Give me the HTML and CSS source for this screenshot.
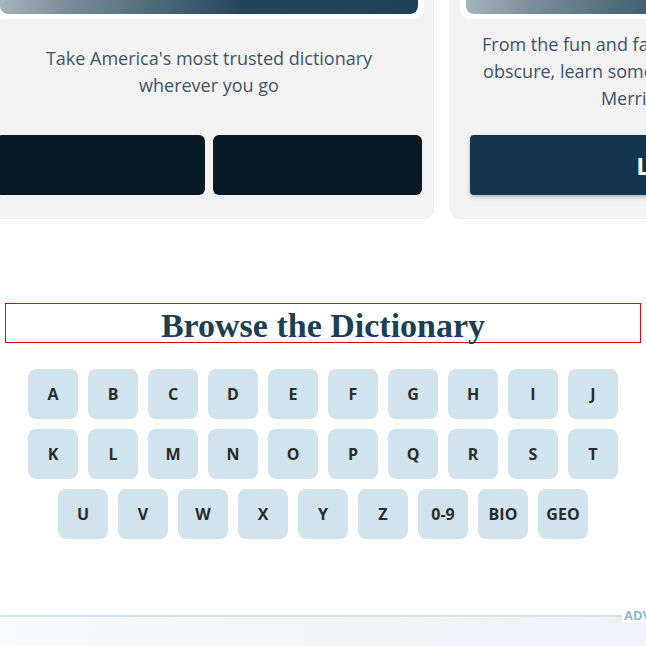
FILE: index.html
```html
<!DOCTYPE html>
<html lang="en">
<head>
<meta charset="utf-8">
<title>Browse the Dictionary</title>
<link rel="stylesheet" href="styles.css">
</head>
<body>
<div class="cards">
  <div class="card">
    <div class="frame"><div class="art"></div></div>
    <p class="blurb">Take America's most trusted dictionary wherever you go</p>
    <div class="stores">
      <a class="store" href="#"></a>
      <a class="store" href="#"></a>
    </div>
  </div>
  <div class="card">
    <div class="frame"><div class="art"></div></div>
    <p class="blurb"><span class="line">From the fun and fascinating to the downright</span><span class="line">obscure, learn something new every day from</span><span class="line">Merriam-Webster</span></p>
    <a class="cta" href="#">Learn More</a>
  </div>
</div>

<h2 class="browse-title">Browse the Dictionary</h2>

<nav class="alpha">
  <a class="key" href="#">A</a><a class="key" href="#">B</a><a class="key" href="#">C</a><a class="key" href="#">D</a><a class="key" href="#">E</a><a class="key" href="#">F</a><a class="key" href="#">G</a><a class="key" href="#">H</a><a class="key" href="#">I</a><a class="key" href="#">J</a>
  <a class="key" href="#">K</a><a class="key" href="#">L</a><a class="key" href="#">M</a><a class="key" href="#">N</a><a class="key" href="#">O</a><a class="key" href="#">P</a><a class="key" href="#">Q</a><a class="key" href="#">R</a><a class="key" href="#">S</a><a class="key" href="#">T</a>
  <a class="key" href="#">U</a><a class="key" href="#">V</a><a class="key" href="#">W</a><a class="key" href="#">X</a><a class="key" href="#">Y</a><a class="key" href="#">Z</a><a class="key" href="#">0-9</a><a class="key" href="#">BIO</a><a class="key" href="#">GEO</a>
</nav>

<div class="ad">
  <span class="ad-label">ADVERTISEMENT</span>
</div>
</body>
</html>
```

FILE: styles.css
```css
html, body {
  margin: 0;
  padding: 0;
  overflow: hidden;
  background: #fff;
  font-family: "Open Sans", "Noto Sans", sans-serif;
}

.cards {
  display: flex;
  gap: 16px;
  margin: -152px 0 0 -16px;
  width: 1000px;
}

.card {
  flex: 0 0 450px;
  box-sizing: border-box;
  background: #f3f3f3;
  border: 1px solid #ebebeb;
  border-radius: 10px;
  padding: 10px 9px 23px;
  display: flex;
  flex-direction: column;
}

.frame {
  background: #fff;
  border-radius: 10px;
  padding: 6px 6px 5px;
}

.art {
  height: 149px;
  border-radius: 8px;
  background: linear-gradient(100deg, #b5c3cb 0%, #7b8f9b 20%, #24465c 60%, #1f4257 100%);
}

.blurb {
  margin: 12px 0 23px;
  height: 81px;
  padding: 0 16px;
  display: flex;
  flex-direction: column;
  align-items: center;
  justify-content: center;
  text-align: center;
  font-size: 18px;
  line-height: 27px;
  color: #3d5466;
}

.line {
  display: block;
  white-space: nowrap;
}

.stores {
  display: flex;
  gap: 8px;
  padding: 0 2px;
}

.store {
  flex: 1;
  height: 60px;
  border-radius: 6px;
  background: #0b1a27;
}

.cta {
  display: flex;
  align-items: center;
  justify-content: center;
  height: 60px;
  margin: 0 10px;
  padding-left: 60px;
  border-radius: 4px;
  background: #12354d;
  box-shadow: 0 2px 4px rgba(0, 0, 0, 0.25);
  color: #fff;
  font-weight: 700;
  font-size: 24px;
  text-decoration: none;
}

.browse-title {
  margin: 84px 5px 0;
  border: 1px solid #e00;
  height: 35px;
  padding-top: 3px;
  line-height: 38px;
  text-align: center;
  font-family: "Liberation Serif", "DejaVu Serif", serif;
  font-weight: 700;
  font-size: 34px;
  color: #1d3f55;
}

.alpha {
  display: flex;
  flex-wrap: wrap;
  justify-content: center;
  gap: 10px;
  width: 590px;
  margin: 26px auto 0;
}

.key {
  width: 50px;
  height: 50px;
  border-radius: 8px;
  background: #d1e3ec;
  display: flex;
  align-items: center;
  justify-content: center;
  color: #2b2b2b;
  font-weight: 700;
  font-size: 16px;
  text-decoration: none;
}

.ad {
  position: relative;
  margin-top: 76px;
  border-top: 2px solid #d3e4ec;
  border-top-left-radius: 2px;
  height: 60px;
  background: linear-gradient(100deg, #f9fbfc 0%, #f1f5f8 60%, #edf2f6 100%);
}

.ad-label {
  position: absolute;
  left: 622px;
  top: -10px;
  padding-left: 2px;
  background: #fff;
  color: #8fb9cd;
  font-size: 13px;
  font-weight: 700;
  line-height: 16px;
  white-space: nowrap;
}
```
